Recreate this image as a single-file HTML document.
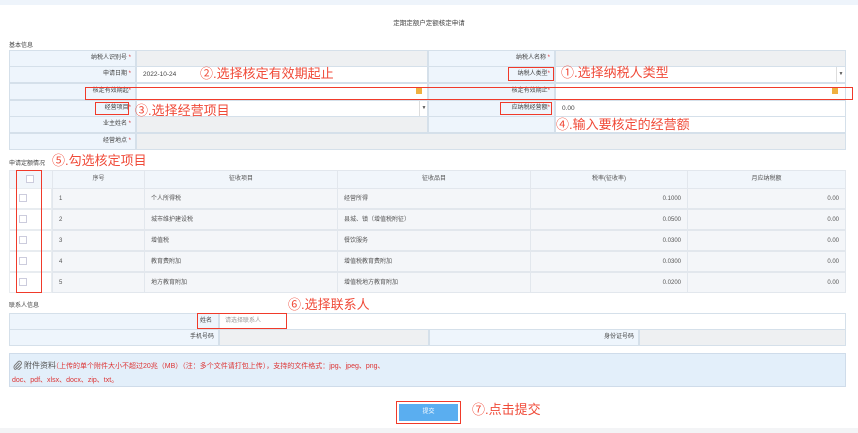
<!DOCTYPE html>
<html><head><meta charset="utf-8">
<style>
*{margin:0;padding:0;box-sizing:border-box}
body{width:858px;height:433px;background:#fff;position:relative;overflow:hidden;font-family:"Liberation Sans","Noto Sans CJK SC",sans-serif;font-size:6px;color:#555}
.a{position:absolute}
.lb{background:#eef5fc;border:1px solid #d5e0ea;text-align:right;padding-right:4px;line-height:15px;font-size:6px;color:#444}
.g{background:#eef0f2;border:1px solid #d5e0ea}
.w{background:#fff;border:1px solid #d5e0ea;line-height:15px;padding-left:6px;font-size:6.5px;color:#444}
.r{color:#d33}
.box{border:1.5px solid #f03a2a;position:absolute}
.ann{position:absolute;color:#f04a38;font-size:13px;line-height:14px;white-space:nowrap}
.cell{position:absolute;border:1px solid #e2e7ed;line-height:20px;font-size:6px;color:#555;padding:0 6px}
.cb{width:8px;height:8px;border:1px solid #ccd;background:#fff;position:absolute}
</style></head><body>
<div class="a" style="left:0;top:0;width:858px;height:5px;background:#eef4fb"></div>
<div class="a" style="left:0;top:17px;width:858px;text-align:center;font-size:6.5px;color:#444">定期定额户定额核定申请</div>
<div class="a" style="left:9px;top:40px;font-size:6px;color:#444">基本信息</div>

<div class="a lb" style="left:9px;top:50px;width:127px;height:17px">纳税人识别号 <span class="r">*</span></div>
<div class="a g" style="left:136px;top:50px;width:292px;height:17px"></div>
<div class="a lb" style="left:428px;top:50px;width:127px;height:17px">纳税人名称 <span class="r">*</span></div>
<div class="a g" style="left:555px;top:50px;width:291px;height:17px"></div>

<div class="a lb" style="left:9px;top:66px;width:127px;height:17px">申请日期 <span class="r">*</span></div>
<div class="a w" style="left:136px;top:66px;width:292px;height:17px">2022-10-24</div>
<div class="a lb" style="left:428px;top:66px;width:127px;height:17px">纳税人类型<span class="r">*</span></div>
<div class="a w" style="left:555px;top:66px;width:291px;height:17px"></div>
<div class="a" style="left:836px;top:67px;width:9px;height:15px;border-left:1px solid #ddd;font-size:5px;line-height:15px;text-align:center">▼</div>

<div class="a lb" style="left:9px;top:83px;width:127px;height:17px">核定有效期起<span class="r">*</span></div>
<div class="a w" style="left:136px;top:83px;width:292px;height:17px"></div>
<div class="a" style="left:416px;top:88px;width:6px;height:6px;background:#f0b040"></div>
<div class="a lb" style="left:428px;top:83px;width:127px;height:17px">核定有效期止<span class="r">*</span></div>
<div class="a w" style="left:555px;top:83px;width:291px;height:17px"></div>
<div class="a" style="left:832px;top:88px;width:6px;height:6px;background:#f0b040"></div>

<div class="a lb" style="left:9px;top:100px;width:127px;height:17px">经营项目<span class="r">*</span></div>
<div class="a w" style="left:136px;top:100px;width:292px;height:17px"></div>
<div class="a" style="left:419px;top:101px;width:9px;height:15px;border-left:1px solid #ddd;font-size:5px;line-height:15px;text-align:center">▼</div>
<div class="a lb" style="left:428px;top:100px;width:127px;height:17px">应纳税经营额<span class="r">*</span></div>
<div class="a w" style="left:555px;top:100px;width:291px;height:17px">0.00</div>

<div class="a lb" style="left:9px;top:116px;width:127px;height:17px">业主姓名 <span class="r">*</span></div>
<div class="a g" style="left:136px;top:116px;width:292px;height:17px"></div>
<div class="a lb" style="left:428px;top:116px;width:127px;height:17px"></div>
<div class="a w" style="left:555px;top:116px;width:291px;height:17px"></div>

<div class="a lb" style="left:9px;top:133px;width:127px;height:17px">经营地点 <span class="r">*</span></div>
<div class="a g" style="left:136px;top:133px;width:710px;height:17px"></div>

<div class="box" style="left:508px;top:67px;width:46px;height:14px"></div>
<div class="box" style="left:85px;top:87px;width:768px;height:13px"></div>
<div class="box" style="left:95px;top:102px;width:34px;height:13px"></div>
<div class="box" style="left:500px;top:102px;width:52px;height:13px"></div>
<div class="ann" style="left:561px;top:66px">①.选择纳税人类型</div>
<div class="ann" style="left:200px;top:67px">②.选择核定有效期起止</div>
<div class="ann" style="left:135px;top:104px">③.选择经营项目</div>
<div class="ann" style="left:556px;top:118px">④.输入要核定的经营额</div>

<div class="a" style="left:9px;top:158px;font-size:6px;color:#444">申请定额情况</div>
<div class="ann" style="left:52px;top:154px">⑤.勾选核定项目</div>
<div class="a" style="left:9px;top:170px;width:837px;height:123px;background:#f4f6f9"></div>
<div class="a" style="left:9px;top:170px;width:837px;height:19px;background:#f1f6fb;border:1px solid #e2e7ed"></div>
<div class="cb" style="left:26px;top:175px"></div>
<div class="cell" style="left:52px;top:170px;width:93px;height:19px;line-height:17px;text-align:center">序号</div>
<div class="cell" style="left:144px;top:170px;width:194px;height:19px;line-height:17px;text-align:center">征收项目</div>
<div class="cell" style="left:337px;top:170px;width:194px;height:19px;line-height:17px;text-align:center">征收品目</div>
<div class="cell" style="left:530px;top:170px;width:158px;height:19px;line-height:17px;text-align:center">税率(征收率)</div>
<div class="cell" style="left:687px;top:170px;width:159px;height:19px;line-height:17px;text-align:center">月应纳税额</div>

<div id="rows"></div>
<script>
var d=[["1","个人所得税","经营所得","0.1000"],["2","城市维护建设税","县城、镇（增值税附征）","0.0500"],["3","增值税","餐饮服务","0.0300"],["4","教育费附加","增值税教育费附加","0.0300"],["5","地方教育附加","增值税地方教育附加","0.0200"]];
var h="";
d.forEach(function(r,i){var y=188+i*21;
h+='<div class="a" style="left:9px;top:'+y+'px;width:43px;height:21px;background:#fff;border:1px solid #e8ecf0"></div><div class="cb" style="left:19px;top:'+(y+6)+'px"></div>';
h+='<div class="cell" style="left:52px;top:'+y+'px;width:93px;height:21px">'+r[0]+'</div>';
h+='<div class="cell" style="left:144px;top:'+y+'px;width:194px;height:21px">'+r[1]+'</div>';
h+='<div class="cell" style="left:337px;top:'+y+'px;width:194px;height:21px">'+r[2]+'</div>';
h+='<div class="cell" style="left:530px;top:'+y+'px;width:158px;height:21px;text-align:right">'+r[3]+'</div>';
h+='<div class="cell" style="left:687px;top:'+y+'px;width:159px;height:21px;text-align:right">0.00</div>';});
document.getElementById("rows").innerHTML=h;
</script>
<div class="box" style="left:16px;top:170px;width:26px;height:123px"></div>

<div class="a" style="left:9px;top:300px;font-size:6px;color:#444">联系人信息</div>
<div class="ann" style="left:288px;top:298px">⑥.选择联系人</div>
<div class="a lb" style="left:9px;top:313px;width:210px;height:17px"></div>
<div class="a w" style="left:219px;top:313px;width:627px;height:17px"></div>
<div class="a" style="left:200px;top:313px;line-height:16px;font-size:6px;color:#444">姓名</div>
<div class="a" style="left:225px;top:313px;line-height:16px;font-size:6px;color:#999">请选择联系人</div>
<div class="a lb" style="left:9px;top:329px;width:210px;height:17px">手机号码</div>
<div class="a g" style="left:219px;top:329px;width:210px;height:17px"></div>
<div class="a lb" style="left:429px;top:329px;width:210px;height:17px">身份证号码</div>
<div class="a g" style="left:639px;top:329px;width:207px;height:17px"></div>
<div class="box" style="left:197px;top:313px;width:90px;height:16px"></div>

<div class="a" style="left:9px;top:353px;width:837px;height:34px;background:#e3effa;border:1px solid #cfdcea"></div>
<svg class="a" style="left:13px;top:360px" width="9" height="10" viewBox="0 0 9 10"><path d="M6.5 3 L3 6.8 a1 1 0 0 0 1.4 1.4 L8 4.4 a2 2 0 0 0 -2.8 -2.8 L1.6 5.4 a3 3 0 0 0 4.2 4.2 L8.4 7" fill="none" stroke="#777" stroke-width="1"/></svg>
<div class="a" style="left:24px;top:360px;font-size:8px;color:#555">附件资料</div>
<div class="a" style="left:52px;top:361px;font-size:7px;color:#d33;white-space:nowrap">（上传的单个附件大小不超过20兆（MB）（注：多个文件请打包上传），支持的文件格式：jpg、jpeg、png、</div>
<div class="a" style="left:12px;top:375px;font-size:7px;color:#d33">doc、pdf、xlsx、docx、zip、txt。</div>

<div class="a" style="left:399px;top:404px;width:59px;height:17px;background:#5aaef0;color:#fff;font-size:6px;text-align:center;line-height:17px">提交</div>
<div class="box" style="left:396px;top:401px;width:65px;height:23px"></div>
<div class="ann" style="left:472px;top:403px">⑦.点击提交</div>
<div class="a" style="left:0;top:428px;width:858px;height:5px;background:#f3f4f6"></div>
</body></html>
